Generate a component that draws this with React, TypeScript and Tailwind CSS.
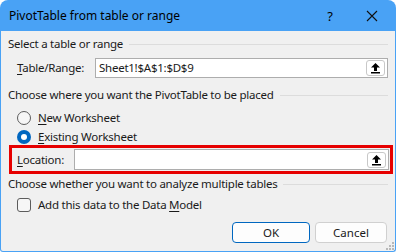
import React from 'react'

const font = { fontFamily: '"Noto Sans", "Open Sans", sans-serif' }

function Upload() {
  return (
    <div className="w-[19px] h-[16px] mr-[2px] flex items-center justify-center bg-white border border-[#c8c8c8] rounded-[3px]">
      <svg width="11" height="12" viewBox="0 0 11 12">
        <path d="M5.5 1 L10 5.5 L7 5.5 L7 9 L4 9 L4 5.5 L1 5.5 Z" fill="#000" />
        <rect x="1" y="10" width="9" height="1.5" fill="#000" />
      </svg>
    </div>
  )
}

function GroupHeader({ text }: { text: string }) {
  return (
    <div className="flex items-center gap-[6px] pr-[7px] h-[16px]">
      <span className="whitespace-nowrap">{text}</span>
      <div className="flex-1 h-px bg-[#dcdcdc]" />
    </div>
  )
}

function Radio({ checked }: { checked?: boolean }) {
  if (checked)
    return (
      <div className="w-[14px] h-[14px] rounded-full bg-[#0067c0] flex items-center justify-center">
        <div className="w-[6px] h-[6px] rounded-full bg-white" />
      </div>
    )
  return <div className="w-[14px] h-[14px] rounded-full border border-[#5c5c5c] bg-[#f6f6f6]" />
}

export default function App() {
  return (
    <div className="w-[396px] h-[252px] bg-white text-[11.5px] leading-[16px] tracking-[-0.25px] text-[#1a1a1a]" style={font}>
      <div className="flex flex-col h-full">
        <div className="h-[31px] shrink-0 bg-[#49a2f5] rounded-t-[8px] flex items-center pl-[9px] text-black tracking-normal">
          <span className="flex-1 text-[12px] leading-none">PivotTable from table or range</span>
          <span className="w-[20px] text-center text-[13px] mr-[26px]">?</span>
          <svg width="12" height="12" viewBox="0 0 12 12" className="mr-[18px]">
            <path d="M1 1 L11 11 M11 1 L1 11" stroke="#111" strokeWidth="1.1" />
          </svg>
        </div>
        <div className="relative flex-1 flex flex-col bg-[#f0f0f0] border-x border-b border-[#49a2f5] rounded-b-[3px] pl-[7px]">
          <div className="mt-[5px]">
            <GroupHeader text="Select a table or range" />
          </div>
          <div className="flex items-center mt-[6px] pl-[9px] pr-[7px] h-[20px]">
            <span className="w-[78px]"><span className="underline underline-offset-2">T</span>able/Range:</span>
            <div className="flex-1 h-[20px] bg-white border border-[#adadad] flex items-center pl-[3px]">
              <span className="flex-1">Sheet1!$A$1:$D$9</span>
              <Upload />
            </div>
          </div>
          <div className="mt-[9px]">
            <GroupHeader text="Choose where you want the PivotTable to be placed" />
          </div>
          <div className="flex items-center gap-[7px] mt-[7px] pl-[9px] h-[16px]">
            <Radio />
            <span><span className="underline underline-offset-2">N</span>ew Worksheet</span>
          </div>
          <div className="flex items-center gap-[7px] mt-[3px] pl-[9px] h-[16px]">
            <Radio checked />
            <span><span className="underline underline-offset-2">E</span>xisting Worksheet</span>
          </div>
          <div className="mr-[2px] ml-[1px] h-[29px] border-[3px] border-[#e60000] flex items-center pl-[5px] pr-[1px]">
            <span className="w-[57px]"><span className="underline underline-offset-2">L</span>ocation:</span>
            <div className="flex-1 h-[21px] bg-white border border-[#adadad] flex items-center justify-end">
              <Upload />
            </div>
          </div>
          <div className="mt-[2px]">
            <GroupHeader text="Choose whether you want to analyze multiple tables" />
          </div>
          <div className="flex items-center gap-[7px] mt-[5px] pl-[9px] h-[16px]">
            <div className="w-[14px] h-[14px] rounded-[3px] border border-[#5c5c5c] bg-[#f6f6f6]" />
            <span>Add this data to the Data <span className="underline underline-offset-2">M</span>odel</span>
          </div>
          <div className="flex justify-end gap-[5px] mt-[9px] pr-[8px]">
            <button className="w-[78px] h-[21px] rounded-[4px] bg-[#fdfdfd] border border-[#0067c0] tracking-normal">OK</button>
            <button className="w-[72px] h-[21px] rounded-[4px] bg-[#fdfdfd] border border-[#d0d0d0] tracking-normal">Cancel</button>
          </div>
          <svg width="8" height="8" viewBox="0 0 8 8" className="absolute right-[1px] bottom-[1px]">
            <rect x="6" y="0" width="2" height="2" fill="#b8b8b8" />
            <rect x="3" y="3" width="2" height="2" fill="#b8b8b8" />
            <rect x="6" y="3" width="2" height="2" fill="#b8b8b8" />
            <rect x="0" y="6" width="2" height="2" fill="#b8b8b8" />
            <rect x="3" y="6" width="2" height="2" fill="#b8b8b8" />
            <rect x="6" y="6" width="2" height="2" fill="#b8b8b8" />
          </svg>
        </div>
      </div>
    </div>
  )
}
